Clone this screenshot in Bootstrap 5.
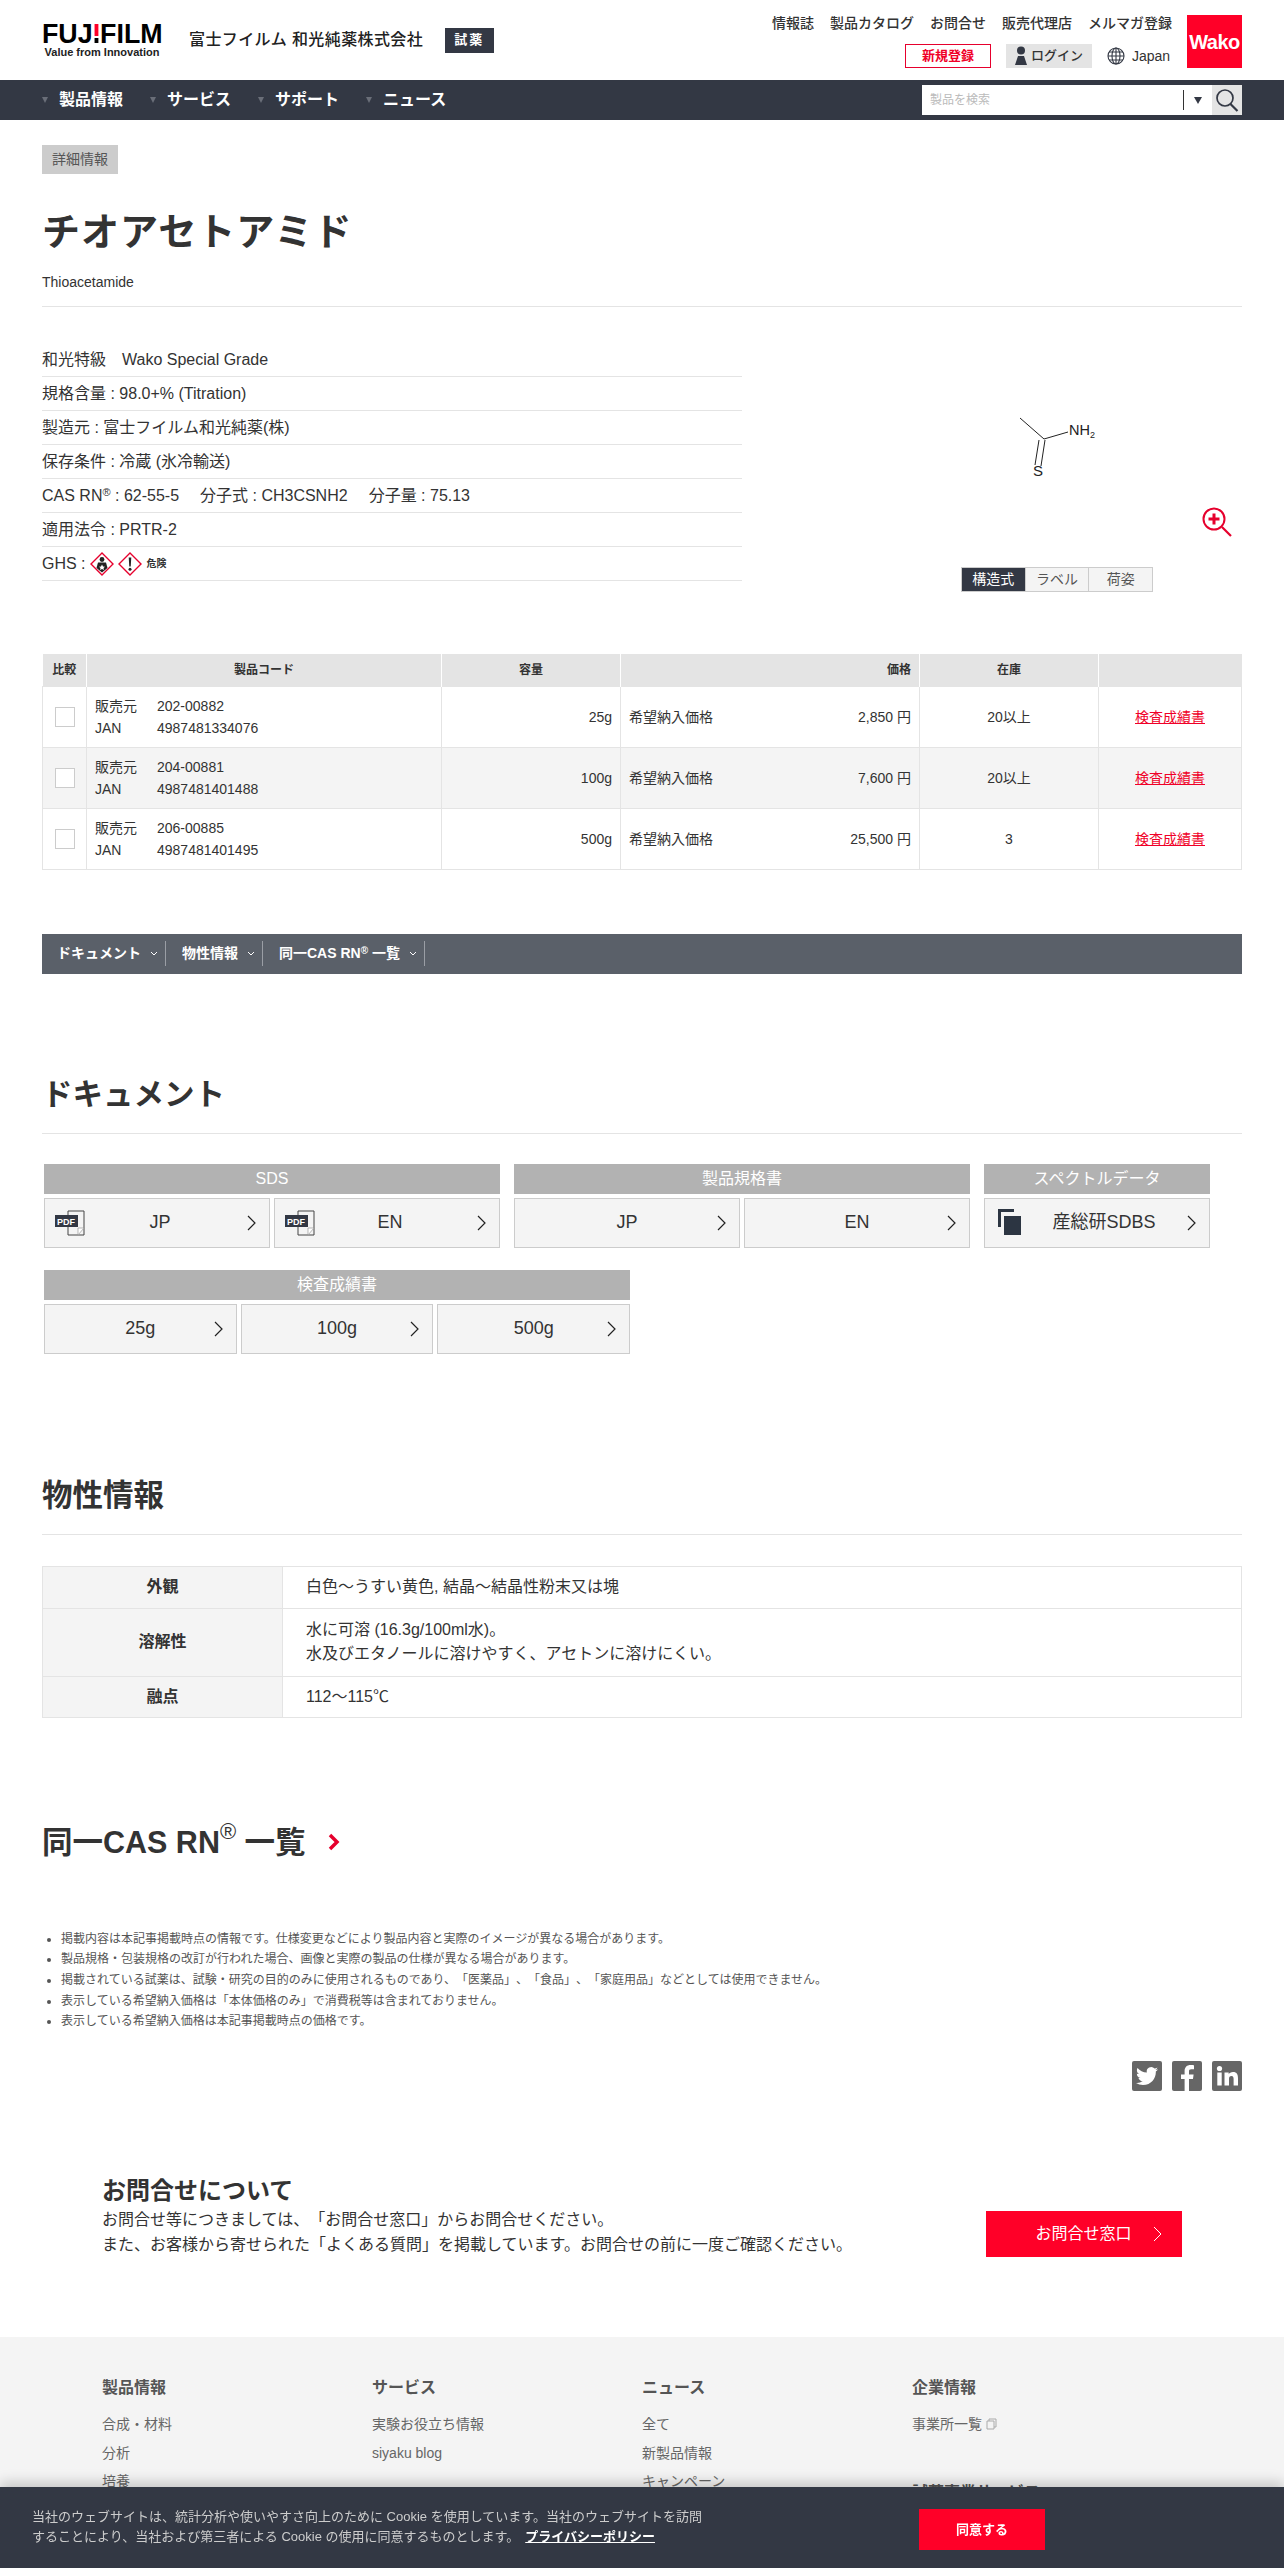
<!DOCTYPE html>
<html lang="ja">
<head>
<meta charset="utf-8">
<title>チオアセトアミド</title>
<link href="https://cdn.jsdelivr.net/npm/bootstrap@5.3.0/dist/css/bootstrap.min.css" rel="stylesheet">
<style>
body{font-family:"Liberation Sans","Noto Sans CJK JP",sans-serif;color:#333;font-size:14px;background:#fff;text-spacing-trim:space-all}
a{color:inherit;text-decoration:none}
.site-top{height:80px;padding:0 42px}
.logo-box{width:120px;margin-top:-1px}
.logo-word{font-size:26.8px;line-height:24px;font-weight:700;color:#000;letter-spacing:0;white-space:nowrap;display:block}
.logo-i{background:linear-gradient(#ff0028 0 58%,#fff 58% 62%,#000 62%);-webkit-background-clip:text;background-clip:text;color:transparent}
.logo-tag{font-size:11px;line-height:12px;font-weight:700;color:#222;display:block;text-align:center}
.co-name{font-size:16px;margin-left:27px;color:#222;font-weight:500;white-space:nowrap;letter-spacing:.4px}
.co-tag{margin-left:21.5px;width:49px;height:25px;background:#333844;color:#fff;font-size:13px;font-weight:700;letter-spacing:2px}
.top-right{width:400px;margin-right:15px;height:68px;padding-top:14px}
.top-links{gap:16px;line-height:18px;font-weight:500;font-size:14px}
.top-row2{margin-top:12px;height:24px}
.reg-btn{width:86px;height:24px;border:1px solid #e6002d;color:#f00028;font-weight:700;font-size:13px;line-height:22px;text-align:center;margin-right:15px}
.login-btn{width:86px;height:24px;background:#e4e4e4;font-size:13px;font-weight:500;margin-right:15px}
.lang-sel{width:65px;font-size:14px;gap:7px}
.wako-box{width:55px;height:53px;background:#ff0028;color:#fff;font-weight:700;font-size:20px;letter-spacing:-.5px;margin-top:15px;margin-bottom:12px}
.main-bar{height:40px;background:#333844;padding:0 42px}
.main-bar .nav-it{color:#fff;font-weight:700;font-size:16px;width:108px;white-space:nowrap}
.nav-tri{width:0;height:0;border-left:3.5px solid transparent;border-right:3.5px solid transparent;border-top:6px solid #6a6e78;margin-right:11px}
.srch{width:320px;height:30px;background:#fff}
.srch input{border:0;outline:0;height:30px;flex:1;min-width:0;padding:0 8px;font-size:12px;background:#fff}
.srch input::placeholder{color:#bbb}
.srch-sep{width:1px;height:20px;background:#333}
.srch-car{width:28px;text-align:center}
.srch-btn{width:30px;height:30px;background:#e4e4e4}
.page-body{padding:0 42px}
.crumb-tag{margin-top:25px;width:76px;height:29px;background:#ccc;color:#555;font-size:14px;line-height:29px;text-align:center}
.ttl{font-size:38px;line-height:48px;font-weight:700;margin:34px 0 16px;letter-spacing:1px;color:#333}
.sub-ttl{line-height:20px;padding-bottom:14px;border-bottom:1px solid #e4e4e4;font-size:14px}
.info-wrap{margin-top:36px;justify-content:space-between}
.info-list{width:700px;font-size:16px;margin:0}
.info-list li{height:34px;line-height:33px;border-bottom:1px solid #e4e4e4;white-space:nowrap}
.info-list sup{font-size:11px;top:-.5em}
.gap-s{margin-left:10.5px}
.ghs-danger{font-size:10px;font-weight:700;margin-left:5px}
.gallery{width:370px}
.chem-area{height:224px}
.zoom-ic{position:absolute;right:10px;bottom:30px}
.img-tabs{width:192px;height:25px;margin-left:89px;border:1px solid #ccc}
.img-tabs span{flex:1;background:#f4f4f4;border-left:1px solid #ccc;font-size:14px;line-height:23px;text-align:center;color:#555}
.img-tabs span:first-child{background:#333844;color:#fff;border-left:0}
.prod-tbl{margin:62px 0 0;width:1199px;table-layout:fixed;border-collapse:collapse;font-size:14px;--bs-table-bg:transparent}
.prod-tbl th{height:32px;padding:0;background:#e4e4e4;border:0;border-left:1px solid #fff;font-size:12px;font-weight:700;text-align:center;vertical-align:middle;color:#333}
.prod-tbl th:first-child{border-left:0}
.prod-tbl td{height:61px;padding:0 8px;border:1px solid #e4e4e4;vertical-align:middle;color:#333;line-height:22px}
.prod-tbl tr.alt td{background:#f4f4f4}
.chk-box{width:20px;height:20px;border:1px solid #ccc;background:#fff;margin:0 auto}
.code-lbl{display:inline-block;width:62px}
.red-link{color:#f00028;text-decoration:underline}
.sub-bar{margin-top:64px;height:40px;background:#5a6069;padding-left:15px;color:#fff;font-weight:700;font-size:14px}
.sub-it{height:25px;border-right:1px solid #9a9ea5;padding-right:7px;margin-right:16px;gap:9px;white-space:nowrap}
.sub-it sup{font-size:10px;top:-.4em}
.sec-h{font-size:30.5px;line-height:44px;font-weight:700;margin:0;color:#333;padding-bottom:17px;border-bottom:1px solid #e4e4e4}
.sec-h.first{margin-top:98px}
.sec-h.second{margin-top:119px}
.docs{margin-top:30px;padding-left:2px;gap:22px 14px;width:1180px}
.doc-head{height:30px;background:#b2b2b2;color:#fff;font-size:16px;line-height:30px;text-align:center}
.doc-btns{margin-top:4px;gap:4px}
.doc-btn{flex:1;height:50px;background:#f4f4f4;border:1px solid #ccc;border-radius:0;padding:0 13px 0 22px;font-size:18px;color:#333;--bs-btn-hover-bg:#eee}
.doc-btn.with-pdf{padding-left:10px}
.doc-btn.with-pdf>svg:first-child{margin-right:-12px}
.doc-btn.with-sq{padding-left:13px}
.doc-btn .lbl{flex:1;text-align:center}
.w456{width:456px}.w226{width:226px}.w586{width:586px}
.prop-tbl{margin:31px 0 0;font-size:16px;--bs-table-bg:transparent;table-layout:fixed;width:1200px}
.prop-tbl th{width:240px;background:#f4f4f4;border:1px solid #e4e4e4;text-align:center;vertical-align:middle;font-weight:700;color:#333;padding:0}
.prop-tbl td{border:1px solid #e4e4e4;padding:8px 23px;line-height:24px;vertical-align:middle;color:#333}
.r1{height:42px}.r2{height:68px}.r3{height:41px}
.cas-h{margin:102px 0 0;font-size:30.5px;line-height:44px;font-weight:700;gap:22px;color:#333}
.cas-h sup{font-size:22px;top:-.6em;font-weight:400}
.notes{margin:65px 0 0;padding-left:19px;font-size:12px;line-height:20.7px;color:#555}
.soc-row{margin-top:29px;gap:10px}
.contact{padding:0 60px;margin-top:83px;height:80px}
.contact h3{font-size:24px;line-height:33px;font-weight:700;margin:0;color:#333}
.contact p{font-size:16px;line-height:25px;margin:0;color:#333}
.contact-btn{width:196px;height:46px;background:#ff0028;color:#fff;font-size:16px;border-radius:0;border:0;--bs-btn-hover-bg:#ff0028;--bs-btn-hover-color:#fff;margin-top:37px}
.site-foot{margin-top:83px;background:#f4f4f4;height:230px;overflow:hidden;padding:40px 102px 0}
.foot-col{width:270px}
.foot-col h4{font-size:16px;line-height:22px;font-weight:700;color:#555;margin:0 0 15px}
.foot-col a{display:block;font-size:14px;line-height:20px;margin-bottom:8.5px;color:#666}
.foot-col h4.foot-h2{margin-top:48px}
.cookie-bar{position:fixed;left:0;right:0;bottom:0;height:81px;background:#333844;box-shadow:0 -5px 12px rgba(0,0,0,.18);z-index:10;color:#ccc}
.cookie-txt{position:absolute;left:32px;top:20px;width:680px;font-size:13px;line-height:20px;margin:0}
.cookie-txt a{color:#fff;font-weight:700;text-decoration:underline;margin-left:6px}
.cookie-btn{position:absolute;left:919px;top:22px;width:126px;height:41px;background:#ff0028;color:#fff;border:0;border-radius:0;font-size:13px;font-weight:700;--bs-btn-hover-bg:#ff0028;--bs-btn-hover-color:#fff}
</style>
</head>
<body>
<header class="site-top d-flex align-items-start">
  <div class="d-flex align-items-center" style="height:80px">
    <a class="logo-box" href="#"><span class="logo-word">FUJ<span class="logo-i">I</span>FILM</span><span class="logo-tag">Value from Innovation</span></a>
    <span class="co-name">富士フイルム 和光純薬株式会社</span>
    <span class="co-tag d-flex align-items-center justify-content-center">試薬</span>
  </div>
  <div class="ms-auto top-right d-flex flex-column align-items-end">
    <div class="top-links d-flex"><a href="#">情報誌</a><a href="#">製品カタログ</a><a href="#">お問合せ</a><a href="#">販売代理店</a><a href="#">メルマガ登録</a></div>
    <div class="top-row2 d-flex align-items-center">
      <a class="reg-btn" href="#">新規登録</a>
      <a class="login-btn d-flex align-items-center justify-content-center gap-1" href="#">
        <svg width="12" height="20" viewBox="0 0 12 20" fill="#333844"><circle cx="6" cy="4.5" r="4"/><path d="M3 10h6l3 9H0z"/></svg>ログイン</a>
      <span class="lang-sel d-flex align-items-center">
        <svg width="18" height="18" viewBox="0 0 18 18" fill="none" stroke="#333844" stroke-width="1.1"><circle cx="9" cy="9" r="8"/><ellipse cx="9" cy="9" rx="4" ry="8"/><path d="M9 1v16M1 9h16M2 5h14M2 13h14"/></svg>Japan</span>
    </div>
  </div>
  <a class="wako-box d-flex align-items-center justify-content-center" href="#">Wako</a>
</header>
<nav class="main-bar d-flex align-items-center">
  <a class="nav-it d-flex align-items-center" href="#"><i class="nav-tri"></i>製品情報</a>
  <a class="nav-it d-flex align-items-center" href="#"><i class="nav-tri"></i>サービス</a>
  <a class="nav-it d-flex align-items-center" href="#"><i class="nav-tri"></i>サポート</a>
  <a class="nav-it d-flex align-items-center" href="#"><i class="nav-tri"></i>ニュース</a>
  <form class="srch ms-auto d-flex align-items-center">
    <input type="text" placeholder="製品を検索">
    <span class="srch-sep"></span>
    <span class="srch-car"><svg width="8" height="7" viewBox="0 0 8 7" fill="#333844"><path d="M0 0h8L4 7z"/></svg></span>
    <span class="srch-btn d-flex align-items-center justify-content-center"><svg width="24" height="24" viewBox="0 0 24 24" fill="none" stroke="#333844" stroke-width="1.7"><circle cx="10" cy="10" r="8"/><path d="M15.5 16l7 7" stroke-width="2.2"/></svg></span>
  </form>
</nav>
<main class="page-body">
  <div class="crumb-tag">詳細情報</div>
  <h1 class="ttl">チオアセトアミド</h1>
  <div class="sub-ttl">Thioacetamide</div>
  <div class="info-wrap d-flex">
    <ul class="info-list list-unstyled">
      <li>和光特級　Wako Special Grade</li>
      <li>規格含量 : 98.0+% (Titration)</li>
      <li>製造元 : 富士フイルム和光純薬(株)</li>
      <li>保存条件 : 冷蔵 (氷冷輸送)</li>
      <li>CAS RN<sup>®</sup> : 62-55-5<span class="gap-s"></span><span class="gap-s"></span>分子式 : CH3CSNH2<span class="gap-s"></span><span class="gap-s"></span>分子量 : 75.13</li>
      <li>適用法令 : PRTR-2</li>
      <li class="d-flex align-items-center">GHS :
        <svg class="ms-1" width="24" height="24" viewBox="0 0 24 24"><path d="M12 1l11 11-11 11L1 12z" fill="#fff" stroke="#e6002d" stroke-width="1.4"/><circle cx="12" cy="7.5" r="2.4" fill="#222"/><path d="M8 10.5h8l1.5 5.5-5.5 4.5L6.500 16z" fill="#222"/><path d="M12 12.500l1 2 2 .2-1.500 1.300.5 2-2-1.100-2 1.100.5-2-1.500-1.300 2-.2z" fill="#fff"/></svg>
        <svg class="ms-1" width="24" height="24" viewBox="0 0 24 24"><path d="M12 1l11 11-11 11L1 12z" fill="#fff" stroke="#e6002d" stroke-width="1.4"/><path d="M10.700 5.500h2.600l-.6 9h-1.400z" fill="#222"/><circle cx="12" cy="17.300" r="1.500" fill="#222"/></svg>
        <span class="ghs-danger">危険</span></li>
    </ul>
    <div class="gallery">
      <div class="chem-area position-relative">
        <svg width="370" height="224" viewBox="0 0 370 224" fill="none" stroke="#222" stroke-width="1">
          <path d="M148 75l24 21 24-7M167 97l-4 25M173 97l-4 26"/>
          <text x="197" y="92" font-size="14.500" fill="#222" stroke="none" font-family="Liberation Sans">NH<tspan font-size="9" dy="3">2</tspan></text>
          <text x="161" y="133" font-size="15" fill="#222" stroke="none" font-family="Liberation Sans">S</text>
        </svg>
        <svg class="zoom-ic" width="30" height="30" viewBox="0 0 30 30" fill="none" stroke="#e6002d"><circle cx="12" cy="12" r="10.500" stroke-width="2"/><path d="M12 6.500v11M6.500 12h11" stroke-width="3"/><path d="M20 20l9 9" stroke-width="2.200"/></svg>
      </div>
      <div class="img-tabs d-flex"><span>構造式</span><span>ラベル</span><span>荷姿</span></div>
    </div>
  </div>

  <table class="table prod-tbl">
    <colgroup><col style="width:44px"><col style="width:355px"><col style="width:179px"><col style="width:299px"><col style="width:179px"><col style="width:143px"></colgroup>
    <thead><tr><th>比較</th><th>製品コード</th><th>容量</th><th class="text-end pe-2">価格</th><th>在庫</th><th></th></tr></thead>
    <tbody>
      <tr><td><div class="chk-box"></div></td><td><span class="code-lbl">販売元</span>202-00882<br><span class="code-lbl">JAN</span>4987481334076</td><td class="text-end">25g</td><td><div class="d-flex justify-content-between"><span>希望納入価格</span><span>2,850 円</span></div></td><td class="text-center">20以上</td><td class="text-center"><a class="red-link" href="#">検査成績書</a></td></tr>
      <tr class="alt"><td><div class="chk-box"></div></td><td><span class="code-lbl">販売元</span>204-00881<br><span class="code-lbl">JAN</span>4987481401488</td><td class="text-end">100g</td><td><div class="d-flex justify-content-between"><span>希望納入価格</span><span>7,600 円</span></div></td><td class="text-center">20以上</td><td class="text-center"><a class="red-link" href="#">検査成績書</a></td></tr>
      <tr><td><div class="chk-box"></div></td><td><span class="code-lbl">販売元</span>206-00885<br><span class="code-lbl">JAN</span>4987481401495</td><td class="text-end">500g</td><td><div class="d-flex justify-content-between"><span>希望納入価格</span><span>25,500 円</span></div></td><td class="text-center">3</td><td class="text-center"><a class="red-link" href="#">検査成績書</a></td></tr>
    </tbody>
  </table>

  <div class="sub-bar d-flex align-items-center">
    <a class="sub-it d-flex align-items-center" href="#">ドキュメント<svg width="8" height="6" viewBox="0 0 8 6" fill="none" stroke="#fff"><path d="M1 1l3 3 3-3"/></svg></a>
    <a class="sub-it d-flex align-items-center" href="#">物性情報<svg width="8" height="6" viewBox="0 0 8 6" fill="none" stroke="#fff"><path d="M1 1l3 3 3-3"/></svg></a>
    <a class="sub-it d-flex align-items-center" href="#"><span>同一CAS RN<sup>®</sup> 一覧</span><svg width="8" height="6" viewBox="0 0 8 6" fill="none" stroke="#fff"><path d="M1 1l3 3 3-3"/></svg></a>
  </div>

  <h2 class="sec-h first">ドキュメント</h2>
  <div class="docs d-flex flex-wrap">
    <div class="w456">
      <div class="doc-head">SDS</div>
      <div class="doc-btns d-flex">
        <a class="btn doc-btn with-pdf d-flex align-items-center" href="#">
          <svg width="30" height="26" viewBox="0 0 30 26"><path d="M13 1h16v24H13z" fill="none" stroke="#444"/><path d="M29 18l-6 7v-7z" fill="#fff" stroke="#999" stroke-width=".7"/><rect x="0" y="5" width="23" height="12" fill="#333844"/><text x="2" y="14.500" font-size="9" font-weight="700" fill="#fff" font-family="Liberation Sans">PDF</text></svg>
          <span class="lbl">JP</span><svg width="9" height="16" viewBox="0 0 9 16" fill="none" stroke="#222" stroke-width="1.200"><path d="M1 1l7 7-7 7"/></svg></a>
        <a class="btn doc-btn with-pdf d-flex align-items-center" href="#">
          <svg width="30" height="26" viewBox="0 0 30 26"><path d="M13 1h16v24H13z" fill="none" stroke="#444"/><path d="M29 18l-6 7v-7z" fill="#fff" stroke="#999" stroke-width=".7"/><rect x="0" y="5" width="23" height="12" fill="#333844"/><text x="2" y="14.500" font-size="9" font-weight="700" fill="#fff" font-family="Liberation Sans">PDF</text></svg>
          <span class="lbl">EN</span><svg width="9" height="16" viewBox="0 0 9 16" fill="none" stroke="#222" stroke-width="1.200"><path d="M1 1l7 7-7 7"/></svg></a>
      </div>
    </div>
    <div class="w456">
      <div class="doc-head">製品規格書</div>
      <div class="doc-btns d-flex">
        <a class="btn doc-btn d-flex align-items-center" href="#"><span class="lbl">JP</span><svg width="9" height="16" viewBox="0 0 9 16" fill="none" stroke="#222" stroke-width="1.200"><path d="M1 1l7 7-7 7"/></svg></a>
        <a class="btn doc-btn d-flex align-items-center" href="#"><span class="lbl">EN</span><svg width="9" height="16" viewBox="0 0 9 16" fill="none" stroke="#222" stroke-width="1.200"><path d="M1 1l7 7-7 7"/></svg></a>
      </div>
    </div>
    <div class="w226">
      <div class="doc-head">スペクトルデータ</div>
      <div class="doc-btns d-flex">
        <a class="btn doc-btn with-sq d-flex align-items-center" href="#">
          <svg width="23" height="27" viewBox="0 0 23 27" fill="#2c3542"><path d="M0 0h16v3H3v15H0z"/><rect x="6" y="7" width="17" height="19"/></svg>
          <span class="lbl">産総研SDBS</span><svg width="9" height="16" viewBox="0 0 9 16" fill="none" stroke="#222" stroke-width="1.200"><path d="M1 1l7 7-7 7"/></svg></a>
      </div>
    </div>
    <div class="w586">
      <div class="doc-head">検査成績書</div>
      <div class="doc-btns d-flex">
        <a class="btn doc-btn d-flex align-items-center" href="#"><span class="lbl">25g</span><svg width="9" height="16" viewBox="0 0 9 16" fill="none" stroke="#222" stroke-width="1.200"><path d="M1 1l7 7-7 7"/></svg></a>
        <a class="btn doc-btn d-flex align-items-center" href="#"><span class="lbl">100g</span><svg width="9" height="16" viewBox="0 0 9 16" fill="none" stroke="#222" stroke-width="1.200"><path d="M1 1l7 7-7 7"/></svg></a>
        <a class="btn doc-btn d-flex align-items-center" href="#"><span class="lbl">500g</span><svg width="9" height="16" viewBox="0 0 9 16" fill="none" stroke="#222" stroke-width="1.200"><path d="M1 1l7 7-7 7"/></svg></a>
      </div>
    </div>
  </div>

  <h2 class="sec-h second">物性情報</h2>
  <table class="table prop-tbl">
    <tbody>
      <tr class="r1"><th>外観</th><td>白色〜うすい黄色, 結晶〜結晶性粉末又は塊</td></tr>
      <tr class="r2"><th>溶解性</th><td>水に可溶 (16.3g/100ml水)。<br>水及びエタノールに溶けやすく、アセトンに溶けにくい。</td></tr>
      <tr class="r3"><th>融点</th><td>112〜115℃</td></tr>
    </tbody>
  </table>

  <h2 class="cas-h d-flex align-items-center"><span>同一CAS RN<sup>®</sup> 一覧</span><svg width="12" height="18" viewBox="0 0 12 18" fill="none" stroke="#e6002d" stroke-width="3.500"><path d="M2 2l7 7-7 7"/></svg></h2>

  <ul class="notes">
    <li>掲載内容は本記事掲載時点の情報です。仕様変更などにより製品内容と実際のイメージが異なる場合があります。</li>
    <li>製品規格・包装規格の改訂が行われた場合、画像と実際の製品の仕様が異なる場合があります。</li>
    <li>掲載されている試薬は、試験・研究の目的のみに使用されるものであり、「医薬品」、「食品」、「家庭用品」などとしては使用できません。</li>
    <li>表示している希望納入価格は「本体価格のみ」で消費税等は含まれておりません。</li>
    <li>表示している希望納入価格は本記事掲載時点の価格です。</li>
  </ul>

  <div class="soc-row d-flex justify-content-end">
    <svg width="30" height="30" viewBox="0 0 30 30"><rect width="30" height="30" rx="2" fill="#666"/><path transform="translate(4 4) scale(.92)" fill="#fff" d="M23.953 4.57a10 10 0 01-2.825.775 4.958 4.958 0 002.163-2.723c-.951.555-2.005.959-3.127 1.184a4.92 4.92 0 00-8.384 4.482C7.69 8.095 4.067 6.13 1.64 3.162a4.822 4.822 0 00-.666 2.475c0 1.71.87 3.213 2.188 4.096a4.904 4.904 0 01-2.228-.616v.06a4.923 4.923 0 003.946 4.827 4.996 4.996 0 01-2.212.085 4.936 4.936 0 004.604 3.417 9.867 9.867 0 01-6.102 2.105c-.39 0-.779-.023-1.17-.067a13.995 13.995 0 007.557 2.209c9.053 0 13.998-7.496 13.998-13.985 0-.21 0-.42-.015-.63A9.935 9.935 0 0024 4.59z"/></svg>
    <svg width="30" height="30" viewBox="0 0 30 30"><rect width="30" height="30" rx="2" fill="#666"/><path fill="#fff" d="M17 30V18h4l.6-4.500H17v-3c0-1.300.4-2.200 2.300-2.200H22V4.200c-.5 0-1.900-.2-3.500-.2-3.500 0-5.900 2.100-5.900 6v3.500H9V18h3.600v12z"/></svg>
    <svg width="30" height="30" viewBox="0 0 30 30"><rect width="30" height="30" rx="2" fill="#666"/><g fill="#fff"><circle cx="7.500" cy="7.500" r="2.600"/><rect x="5.300" y="11.500" width="4.400" height="13"/><path d="M12.500 11.500h4.200v1.800c.7-1.200 2.200-2.200 4.300-2.200 4 0 5 2.600 5 6.200v7.200h-4.400v-6.400c0-1.700-.3-3.100-2.100-3.100-1.900 0-2.500 1.300-2.500 3.100v6.400h-4.500z"/></g></svg>
  </div>

  <section class="contact d-flex justify-content-between">
    <div>
      <h3>お問合せについて</h3>
      <p>お問合せ等につきましては、「お問合せ窓口」からお問合せください。<br>また、お客様から寄せられた「よくある質問」を掲載しています。お問合せの前に一度ご確認ください。</p>
    </div>
    <a class="btn contact-btn d-flex align-items-center" href="#"><span class="flex-grow-1 text-center ps-3">お問合せ窓口</span><svg class="me-2" width="9" height="16" viewBox="0 0 9 16" fill="none" stroke="#fff" stroke-width="1"><path d="M1 1l7 7-7 7"/></svg></a>
  </section>
</main>
<footer class="site-foot d-flex">
  <div class="foot-col"><h4>製品情報</h4><a href="#">合成・材料</a><a href="#">分析</a><a href="#">培養</a></div>
  <div class="foot-col"><h4>サービス</h4><a href="#">実験お役立ち情報</a><a href="#">siyaku blog</a></div>
  <div class="foot-col"><h4>ニュース</h4><a href="#">全て</a><a href="#">新製品情報</a><a href="#">キャンペーン</a></div>
  <div class="foot-col"><h4>企業情報</h4><a href="#" class="d-flex align-items-center gap-1">事業所一覧 <svg width="11" height="12" viewBox="0 0 11 12" fill="none" stroke="#aaa"><path d="M3 3V1h7v8H8M1 3h7v8H1z"/></svg></a><h4 class="foot-h2">試薬事業サービス</h4></div>
</footer>
<aside class="cookie-bar">
  <p class="cookie-txt">当社のウェブサイトは、統計分析や使いやすさ向上のために Cookie を使用しています。当社のウェブサイトを訪問することにより、当社および第三者による Cookie の使用に同意するものとします。<a href="#">プライバシーポリシー</a></p>
  <button class="btn cookie-btn" type="button">同意する</button>
</aside>
<script src="https://cdn.jsdelivr.net/npm/bootstrap@5.3.0/dist/js/bootstrap.bundle.min.js"></script>
</body>
</html>
